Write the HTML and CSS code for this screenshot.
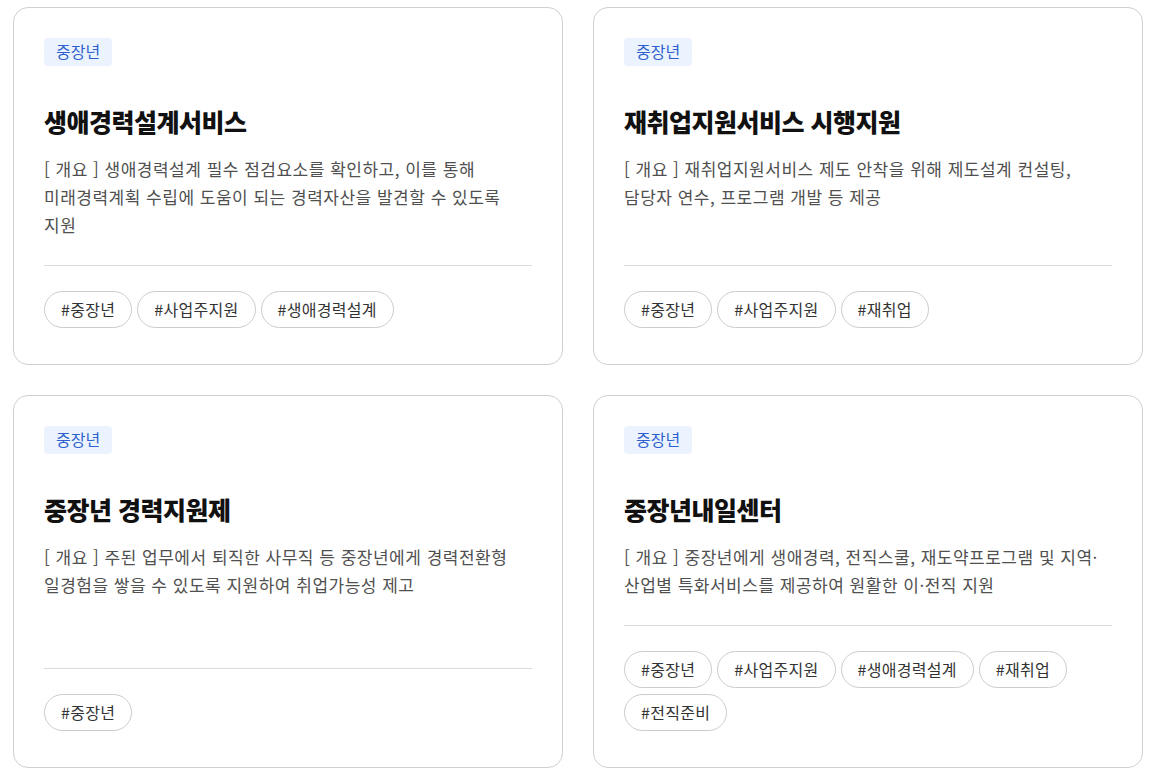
FILE: index.html
```html
<!DOCTYPE html>
<html lang="ko">
<head>
    <meta charset="UTF-8">
    <meta name="viewport" content="width=device-width, initial-scale=1.0">
    <title>중장년 지원 서비스</title>
    <link rel="stylesheet" href="styles.css">
</head>
<body>
    <div class="card-list">
        <div class="card">
            <span class="badge">중장년</span>
            <h3 class="card-title">생애경력설계서비스</h3>
            <p class="card-desc">[ 개요 ] 생애경력설계 필수 점검요소를 확인하고, 이를 통해<br>미래경력계획 수립에 도움이 되는 경력자산을 발견할 수 있도록<br>지원</p>
            <div class="card-tags">
                <span class="tag">#중장년</span>
                <span class="tag">#사업주지원</span>
                <span class="tag">#생애경력설계</span>
            </div>
        </div>
        <div class="card">
            <span class="badge">중장년</span>
            <h3 class="card-title">재취업지원서비스 시행지원</h3>
            <p class="card-desc">[ 개요 ] 재취업지원서비스 제도 안착을 위해 제도설계 컨설팅,<br>담당자 연수, 프로그램 개발 등 제공</p>
            <div class="card-tags">
                <span class="tag">#중장년</span>
                <span class="tag">#사업주지원</span>
                <span class="tag">#재취업</span>
            </div>
        </div>
        <div class="card">
            <span class="badge">중장년</span>
            <h3 class="card-title">중장년 경력지원제</h3>
            <p class="card-desc">[ 개요 ] 주된 업무에서 퇴직한 사무직 등 중장년에게 경력전환형<br>일경험을 쌓을 수 있도록 지원하여 취업가능성 제고</p>
            <div class="card-tags">
                <span class="tag">#중장년</span>
            </div>
        </div>
        <div class="card">
            <span class="badge">중장년</span>
            <h3 class="card-title">중장년내일센터</h3>
            <p class="card-desc">[ 개요 ] 중장년에게 생애경력, 전직스쿨, 재도약프로그램 및 지역·<br>산업별 특화서비스를 제공하여 원활한 이·전직 지원</p>
            <div class="card-tags">
                <span class="tag">#중장년</span>
                <span class="tag">#사업주지원</span>
                <span class="tag">#생애경력설계</span>
                <span class="tag">#재취업</span>
                <span class="tag">#전직준비</span>
            </div>
        </div>
    </div>
</body>
</html>
```

FILE: styles.css
```css
body, html {
    margin: 0;
    padding: 0;
    background: #fff;
    font-family: "Noto Sans CJK KR", "Noto Sans", sans-serif;
}
.card-list {
    display: grid;
    grid-template-columns: 550px 550px;
    gap: 30px;
    padding: 7px 0 0 13px;
}
.card {
    display: flex;
    flex-direction: column;
    align-items: flex-start;
    border: 1px solid #cfcfcf;
    border-radius: 15px;
    padding: 30px 30px 36px 30px;
}
.badge {
    display: inline-block;
    height: 28px;
    line-height: 27px;
    padding: 0 12px;
    font-size: 16px;
    color: #2f5fcf;
    background: #ebf3fe;
    border-radius: 4px;
}
.card-title {
    margin: 38px 0 17px 0;
    font-size: 25px;
    line-height: 34px;
    font-weight: 800;
    letter-spacing: -0.5px;
    color: #111;
}
.card-desc {
    margin: 0 0 26px 0;
    font-size: 17px;
    line-height: 28px;
    letter-spacing: 0.5px;
    color: #505050;
}
.card-tags {
    margin-top: auto;
    align-self: stretch;
    display: flex;
    flex-wrap: wrap;
    gap: 6px 5px;
    border-top: 1px solid #dcdcdc;
    padding-top: 25px;
}
.tag {
    display: inline-block;
    height: 35px;
    line-height: 35px;
    padding: 0 16px;
    font-size: 16px;
    letter-spacing: 0.3px;
    color: #333;
    border: 1px solid #cccccc;
    border-radius: 19px;
}
```
